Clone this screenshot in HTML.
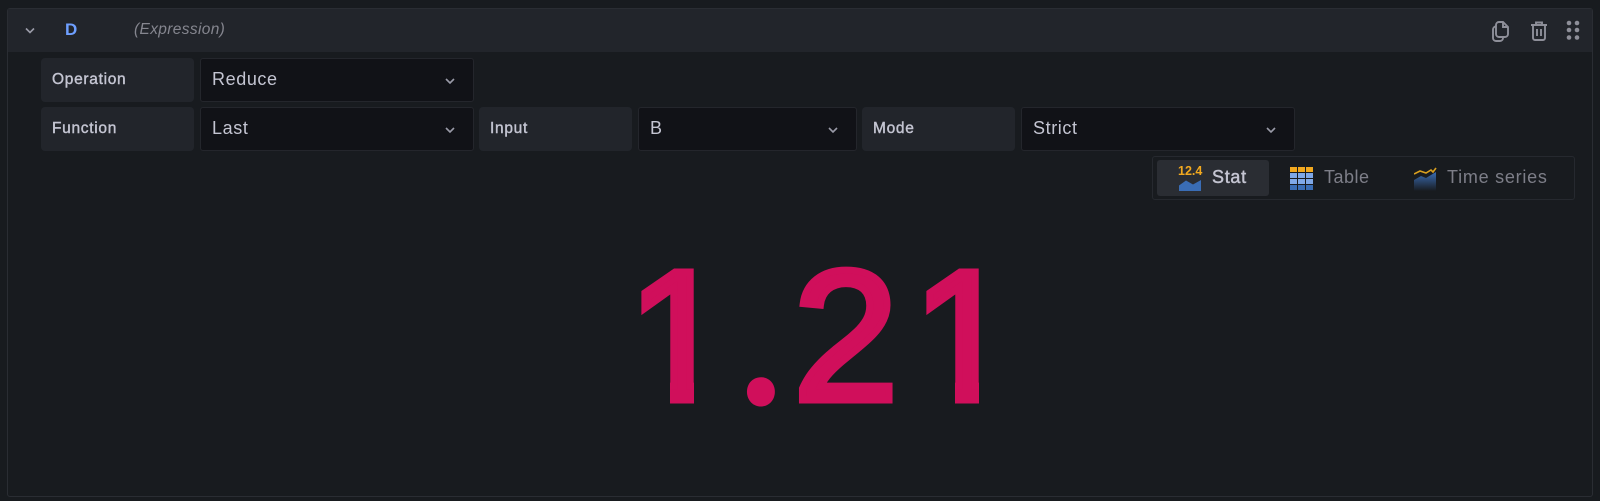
<!DOCTYPE html>
<html><head><meta charset="utf-8"><style>
html,body{margin:0;padding:0;width:1600px;height:501px;overflow:hidden;background:#181b1f}
body{position:relative;font-family:"Liberation Sans",sans-serif}
div,span,svg{position:absolute;box-sizing:border-box}
.t{white-space:nowrap;line-height:20px;height:20px}
.lab{background:#22252b;border-radius:4px}
.sel{background:#111217;border:1px solid #24262c;border-radius:3px}
.lt{font-size:15.5px;color:#c4c5d2;letter-spacing:.7px;-webkit-text-stroke:.4px #c4c5d2}
.st{font-size:18px;color:#c4c5d2;letter-spacing:.6px}
.big{font-family:"Liberation Sans",sans-serif;font-size:186px;color:#d00f5b;-webkit-text-stroke:7px #d00f5b;line-height:240px;height:240px;white-space:nowrap}
.one{clip-path:polygon(-50px -50px,150px -50px,150px 163px,67px 163px,67px 240px,43px 240px,43px 163px,-50px 163px)}
.dot{font-family:"Noto Sans CJK JP",sans-serif;font-size:180px;font-weight:500;color:#d00f5b;line-height:240px;height:240px;white-space:nowrap}
</style></head><body>
<div style="left:7px;top:8px;width:1586px;height:489px;border:1px solid #2a2d33;border-radius:3px"></div>
<div style="left:8px;top:9px;width:1584px;height:43px;background:#22252b"></div>
<svg style="left:24px;top:24px" width="12" height="12" viewBox="0 0 12 12"><path d="M2 4.500 6 8.500 10 4.500" fill="none" stroke="#9a9ba8" stroke-width="1.6"/></svg>
<div class="t" style="left:65px;top:20px;font-size:17px;font-weight:bold;color:#6e9fff">D</div>
<div class="t" style="left:134px;top:20px;font-size:15.5px;font-style:italic;color:#85868f;letter-spacing:.35px">(Expression)</div>
<svg style="left:1491px;top:19px" width="20" height="24" viewBox="0 0 20 24" fill="none" stroke="#8e8f99" stroke-width="1.9"><path d="M8 3h4l5 5v7a3 3 0 0 1-3 3H8a3 3 0 0 1-3-3V6a3 3 0 0 1 3-3z"/><path d="M12 3v5h5"/><path d="M5 7.500a3 3 0 0 0-3 3V19a3 3 0 0 0 3 3h4a3 3 0 0 0 3-3v-1"/></svg>
<svg style="left:1529px;top:20px" width="20" height="22" viewBox="0 0 20 22" fill="none" stroke="#8e8f99" stroke-width="1.9"><path d="M2 5h16M7 5V2.500h6V5M4 5v13a2 2 0 0 0 2 2h8a2 2 0 0 0 2-2V5M8 9v7M12 9v7"/></svg>
<svg style="left:1564px;top:18px" width="18" height="24" viewBox="0 0 18 24" fill="#8e8f99"><circle cx="5" cy="5" r="2.300"/><circle cx="13" cy="5" r="2.300"/><circle cx="5" cy="12" r="2.300"/><circle cx="13" cy="12" r="2.300"/><circle cx="5" cy="19.500" r="2.300"/><circle cx="13" cy="19.500" r="2.300"/></svg>

<div class="lab" style="left:41px;top:58px;width:153px;height:44px"></div>
<div class="t lt" style="left:52px;top:70px">Operation</div>
<div class="sel" style="left:200px;top:58px;width:274px;height:44px"></div>
<div class="t st" style="left:212px;top:69px">Reduce</div>
<svg style="left:444px;top:75px" width="12" height="12" viewBox="0 0 12 12"><path d="M2 4 6 8 10 4" fill="none" stroke="#9a9ba8" stroke-width="1.6"/></svg>

<div class="lab" style="left:41px;top:107px;width:153px;height:44px"></div>
<div class="t lt" style="left:52px;top:119px">Function</div>
<div class="sel" style="left:200px;top:107px;width:274px;height:44px"></div>
<div class="t st" style="left:212px;top:118px">Last</div>
<svg style="left:444px;top:124px" width="12" height="12" viewBox="0 0 12 12"><path d="M2 4 6 8 10 4" fill="none" stroke="#9a9ba8" stroke-width="1.6"/></svg>

<div class="lab" style="left:479px;top:107px;width:153px;height:44px"></div>
<div class="t lt" style="left:490px;top:119px">Input</div>
<div class="sel" style="left:638px;top:107px;width:219px;height:44px"></div>
<div class="t st" style="left:650px;top:118px">B</div>
<svg style="left:827px;top:124px" width="12" height="12" viewBox="0 0 12 12"><path d="M2 4 6 8 10 4" fill="none" stroke="#9a9ba8" stroke-width="1.6"/></svg>

<div class="lab" style="left:862px;top:107px;width:153px;height:44px"></div>
<div class="t lt" style="left:873px;top:119px">Mode</div>
<div class="sel" style="left:1021px;top:107px;width:274px;height:44px"></div>
<div class="t st" style="left:1033px;top:118px">Strict</div>
<svg style="left:1265px;top:124px" width="12" height="12" viewBox="0 0 12 12"><path d="M2 4 6 8 10 4" fill="none" stroke="#9a9ba8" stroke-width="1.6"/></svg>

<div style="left:1152px;top:156px;width:423px;height:44px;border:1px solid #26292f;border-radius:3px"></div>
<div style="left:1157px;top:160px;width:112px;height:36px;background:#2a2d33;border-radius:3px"></div>
<div class="t" style="left:1178px;top:161px;font-size:12.5px;font-weight:bold;color:#f2a91f">12.4</div>
<svg style="left:1179px;top:179px" width="22" height="12" viewBox="0 0 22 12"><path d="M0 6.500 7 1.500 14 5.500 22 1V12H0z" fill="#3a6db5"/></svg>
<div class="t" style="left:1212px;top:167px;font-size:18px;color:#c4c5d2;letter-spacing:.7px;-webkit-text-stroke:.45px #c4c5d2">Stat</div>

<svg style="left:1290px;top:167px" width="23" height="23" viewBox="0 0 23 23"><rect width="23" height="5" fill="#f2a91f"/><rect y="6" width="23" height="5" fill="#7fa8e8"/><rect y="12" width="23" height="5" fill="#7fa8e8"/><rect y="18" width="23" height="5" fill="#3a6db5"/><path d="M7.500 0v23M15.500 0v23" stroke="#181b1f"/></svg>
<div class="t" style="left:1324px;top:167px;font-size:18px;color:#7d7e88;letter-spacing:.5px">Table</div>

<svg style="left:1414px;top:167px" width="23" height="24" viewBox="0 0 23 24"><defs><linearGradient id="g" x1="0" y1="0" x2="0" y2="1"><stop offset="0" stop-color="#3a6db5"/><stop offset="1" stop-color="#181b1f"/></linearGradient></defs><path d="M0 13 7 9 12 11 22 5V24H0z" fill="url(#g)"/><path d="M0 7 6 4 12 6 17 3 19 5 22 1" fill="none" stroke="#d9a020" stroke-width="1.600"/></svg>
<div class="t" style="left:1447px;top:167px;font-size:18px;color:#7d7e88;letter-spacing:.75px">Time series</div>

<span class="big one" style="left:627px;top:217px">1</span>
<span class="dot" style="left:734px;top:206px">.</span>
<span class="big" style="left:793px;top:217px;transform:scaleX(1.02);transform-origin:0 0">2</span>
<span class="big one" style="left:912px;top:217px">1</span>
</body></html>
